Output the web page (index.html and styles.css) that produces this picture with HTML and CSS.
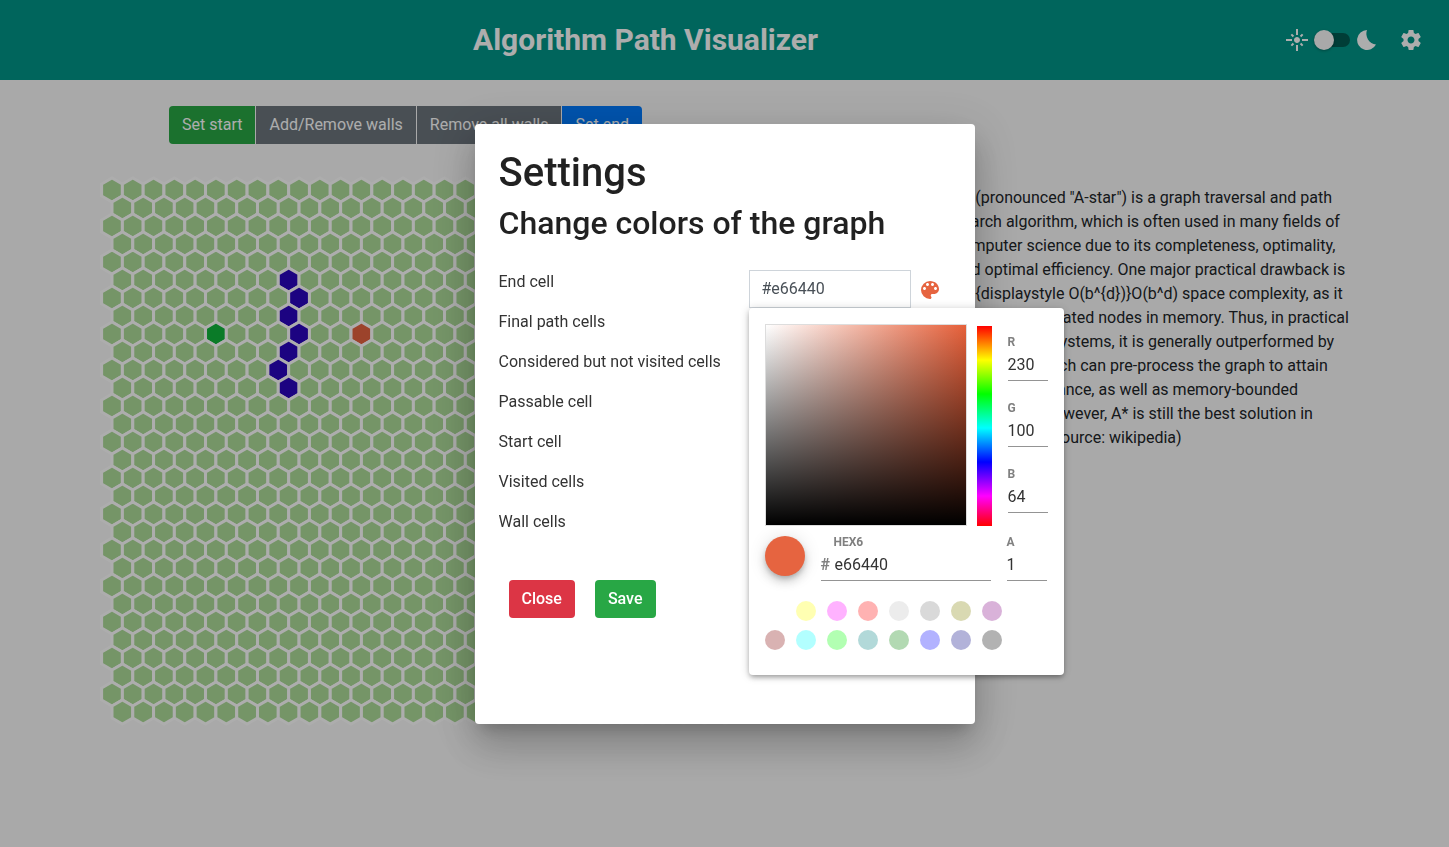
FILE: index.html
```html
<!DOCTYPE html>
<html lang="en">
<head>
<meta charset="utf-8">
<title>Algorithm Path Visualizer</title>
<link rel="stylesheet" href="styles.css">
</head>
<body>
<header class="toolbar">
  <h1 class="toolbar-title">Algorithm Path Visualizer</h1>
  <div class="toolbar-actions">
    <svg class="icon" viewBox="0 0 24 24" aria-hidden="true"><path d="M7 11H1v2h6v-2zm2.170-3.240L7.050 5.640 5.640 7.050l2.120 2.120 1.410-1.410zM13 1h-2v6h2V1zm5.360 6.050l-1.410-1.410-2.120 2.120 1.410 1.410 2.120-2.120zM17 11v2h6v-2h-6zm-5-2c-1.660 0-3 1.340-3 3s1.340 3 3 3 3-1.340 3-3-1.340-3-3-3zm2.830 7.240l2.120 2.120 1.410-1.410-2.120-2.120-1.410 1.410zm-9.190.710l1.410 1.410 2.120-2.120-1.410-1.410-2.120 2.120zM11 23h2v-6h-2v6z"/></svg>
    <input class="switch" type="checkbox" role="switch" aria-label="Dark mode">
    <svg class="icon" viewBox="0 0 24 24" aria-hidden="true"><path d="M12 2A10 10 0 1 0 21 16.600A11 11 0 0 1 12 2z"/></svg>
    <button class="icon-button" type="button" aria-label="Open settings">
      <svg class="icon" viewBox="0 0 24 24" aria-hidden="true"><path d="M19.430 12.980c.040-.320.070-.640.070-.980s-.030-.660-.070-.980l2.110-1.650c.190-.150.240-.420.120-.640l-2-3.460c-.120-.220-.390-.300-.610-.220l-2.490 1c-.520-.400-1.080-.730-1.690-.980l-.380-2.650C14.460 2.180 14.250 2 14 2h-4c-.250 0-.460.180-.490.420l-.380 2.650c-.610.250-1.170.590-1.690.980l-2.490-1c-.230-.090-.490 0-.610.220l-2 3.460c-.130.220-.070.490.120.640l2.110 1.650c-.040.320-.070.650-.070.980s.030.660.070.980l-2.110 1.650c-.190.150-.240.420-.120.640l2 3.460c.120.220.390.300.610.220l2.490-1c.520.400 1.080.730 1.690.980l.380 2.650c.030.240.240.420.490.420h4c.250 0 .460-.180.490-.420l.380-2.650c.610-.250 1.170-.590 1.690-.980l2.490 1c.230.090.490 0 .610-.220l2-3.460c.120-.220.070-.490-.120-.640l-2.110-1.650zM12 15.500c-1.930 0-3.500-1.570-3.500-3.500s1.570-3.500 3.500-3.500 3.500 1.570 3.500 3.500-1.570 3.500-3.500 3.500z"/></svg>
    </button>
  </div>
</header>

<main class="page">
  <section class="board">
    <div class="tools" role="group" aria-label="Grid tools">
      <button class="btn btn-success" type="button">Set start</button>
      <button class="btn btn-secondary" type="button">Add/Remove walls</button>
      <button class="btn btn-secondary" type="button">Remove all walls</button>
      <button class="btn btn-primary" type="button">Set end</button>
    </div>
    <svg class="grid" id="grid" viewBox="0 0 638 550" role="img" aria-label="Hexagonal grid"></svg>
  </section>
  <p class="description">A* (pronounced "A-star") is a graph traversal and path search algorithm, which is often used in many fields of computer science due to its completeness, optimality, and optimal efficiency. One major practical drawback is its {displaystyle O(b^{d})}O(b^d) space complexity, as it stores all generated nodes in memory. Thus, in practical travel-routing systems, it is generally outperformed by algorithms which can pre-process the graph to attain better performance, as well as memory-bounded approaches; however, A* is still the best solution in many cases. (source: wikipedia)</p>
</main>

<div class="backdrop">
  <div class="dialog" role="dialog" aria-modal="true" aria-labelledby="dialog-title">
    <h1 class="dialog-title" id="dialog-title">Settings</h1>
    <h2 class="dialog-subtitle">Change colors of the graph</h2>
    <div class="settings">
      <ul class="cell-list">
        <li><label for="end-color">End cell</label></li>
        <li>Final path cells</li>
        <li>Considered but not visited cells</li>
        <li>Passable cell</li>
        <li>Start cell</li>
        <li>Visited cells</li>
        <li>Wall cells</li>
      </ul>
      <div class="color-field">
        <input class="color-input" id="end-color" type="text" value="#e66440">
        <button class="palette-button" type="button" aria-label="Pick color">
          <svg class="icon" viewBox="0 0 24 24" aria-hidden="true"><path d="M12 3a9 9 0 0 0 0 18c.830 0 1.500-.670 1.500-1.500 0-.390-.150-.740-.390-1.010-.230-.260-.380-.610-.380-.990 0-.830.670-1.500 1.500-1.500H16c2.760 0 5-2.240 5-5 0-4.420-4.030-8-9-8zm-5.500 9c-.830 0-1.500-.670-1.500-1.500S5.670 9 6.500 9 8 9.670 8 10.500 7.330 12 6.500 12zm3-4C8.670 8 8 7.330 8 6.500S8.670 5 9.500 5s1.500.670 1.500 1.500S10.330 8 9.500 8zm5 0c-.830 0-1.500-.670-1.500-1.500S13.670 5 14.500 5s1.500.670 1.500 1.500S15.330 8 14.500 8zm3 4c-.830 0-1.500-.670-1.500-1.500S16.670 9 17.500 9s1.500.670 1.500 1.500-.670 1.500-1.500 1.500z"/></svg>
        </button>
        <div class="picker">
          <div class="picker-top">
            <div class="shade"></div>
            <div class="hue"></div>
            <div class="channels">
              <label class="field">R<input type="text" value="230"></label>
              <label class="field">G<input type="text" value="100"></label>
              <label class="field">B<input type="text" value="64"></label>
            </div>
          </div>
          <div class="picker-values">
            <span class="preview"></span>
            <label class="field field-hex">HEX6<span class="hex-row"><span class="hash">#</span><input type="text" value="e66440"></span></label>
            <label class="field field-alpha">A<input type="text" value="1"></label>
          </div>
          <div class="swatches">
            <button class="swatch white" type="button" aria-label="White"></button>
            <button class="swatch yellow" type="button" aria-label="Yellow"></button>
            <button class="swatch fuchsia" type="button" aria-label="Fuchsia"></button>
            <button class="swatch red" type="button" aria-label="Red"></button>
            <button class="swatch silver" type="button" aria-label="Silver"></button>
            <button class="swatch gray" type="button" aria-label="Gray"></button>
            <button class="swatch olive" type="button" aria-label="Olive"></button>
            <button class="swatch purple" type="button" aria-label="Purple"></button>
            <button class="swatch maroon" type="button" aria-label="Maroon"></button>
            <button class="swatch aqua" type="button" aria-label="Aqua"></button>
            <button class="swatch lime" type="button" aria-label="Lime"></button>
            <button class="swatch teal" type="button" aria-label="Teal"></button>
            <button class="swatch green" type="button" aria-label="Green"></button>
            <button class="swatch blue" type="button" aria-label="Blue"></button>
            <button class="swatch navy" type="button" aria-label="Navy"></button>
            <button class="swatch black" type="button" aria-label="Black"></button>
          </div>
        </div>
      </div>
    </div>
    <div class="dialog-actions">
      <button class="btn btn-danger" type="button">Close</button>
      <button class="btn btn-success" type="button">Save</button>
    </div>
  </div>
</div>
<script src="grid.js"></script>
</body>
</html>
```

FILE: grid.js
```js
const RADIUS = 12;
const ROWS = 30;
const COLUMNS = 30;
const kinds = {
  '8,5': 'start', '8,12': 'end',
  '5,8': 'wall', '6,9': 'wall', '7,8': 'wall', '8,9': 'wall',
  '9,8': 'wall', '10,8': 'wall', '11,8': 'wall'
};
const cellWidth = RADIUS * Math.sqrt(3);
const svg = document.getElementById('grid');

for (let row = 0; row < ROWS; row++) {
  for (let column = 0; column < COLUMNS; column++) {
    const cx = 12 + column * cellWidth + (row % 2) * cellWidth / 2;
    const cy = 14 + row * RADIUS * 1.5;
    const points = [];
    for (let corner = 0; corner < 6; corner++) {
      const angle = Math.PI / 3 * corner + Math.PI / 6;
      points.push((cx + RADIUS * Math.cos(angle)).toFixed(2) + ',' + (cy + RADIUS * Math.sin(angle)).toFixed(2));
    }
    const cell = document.createElementNS('http://www.w3.org/2000/svg', 'polygon');
    cell.setAttribute('points', points.join(' '));
    cell.setAttribute('class', 'cell ' + (kinds[row + ',' + column] || 'passable'));
    svg.appendChild(cell);
  }
}
```

FILE: styles.css
```css
* { box-sizing: border-box; }

body {
  margin: 0;
  min-height: 100vh;
  background: #fafafa;
  color: #212529;
  font: 400 16px/24px Roboto, sans-serif;
}

button, input { font: inherit; }

.icon { display: block; width: 24px; height: 24px; fill: currentColor; }

/* Toolbar */
.toolbar {
  display: grid;
  grid-template-columns: 1fr auto;
  align-items: center;
  height: 80px;
  padding: 0 26px 0 6px;
  background: #009688;
  color: #fff;
}
.toolbar-title {
  margin: 0;
  font-size: 30px;
  font-weight: 700;
  line-height: 40px;
  text-align: center;
}
.toolbar-actions { display: flex; align-items: center; gap: 5px; }
.icon-button {
  margin-left: 15px;
  padding: 0;
  border: 0;
  background: none;
  color: inherit;
}
.switch {
  appearance: none;
  position: relative;
  width: 36px;
  height: 14px;
  margin: 0;
  border-radius: 8px;
  background: #005a52;
}
.switch::before {
  content: "";
  position: absolute;
  top: -3px;
  left: 0;
  width: 20px;
  height: 20px;
  border-radius: 50%;
  background: #fafafa;
  box-shadow: 0 1px 3px rgba(0, 0, 0, .3);
}

/* Page */
.page {
  display: flex;
  justify-content: space-between;
  padding: 26px 95px 0 100px;
}
.board { flex: 0 1 638px; }
.tools { display: flex; gap: 1px; margin-left: 69px; }
.grid { display: block; width: 100%; margin-top: 32px; }
.cell { stroke: #fff; stroke-width: 3px; }
.passable { fill: #addc99; }
.start { fill: #10b63b; }
.end { fill: #e66440; }
.wall { fill: #2a05bf; }
.description { flex: 0 1 400px; margin: 80px 0 0; }

.btn {
  padding: 7px 13px;
  border: 0;
  border-radius: 4px;
  color: #fff;
  white-space: nowrap;
}
.tools .btn { border-radius: 0; }
.tools .btn:first-child { border-radius: 4px 0 0 4px; }
.tools .btn:last-child { border-radius: 0 4px 4px 0; }
.btn-success { background: #28a745; }
.btn-secondary { background: #6c757d; }
.btn-primary { background: #007bff; }
.btn-danger { background: #dc3545; }

/* Dialog */
.backdrop {
  position: fixed;
  inset: 0;
  display: flex;
  align-items: center;
  justify-content: center;
  background: rgba(0, 0, 0, .32);
}
.dialog {
  width: 500px;
  min-height: 600px;
  padding: 24px;
  border-radius: 4px;
  background: #fff;
  color: rgba(0, 0, 0, .87);
  box-shadow: 0 11px 15px -7px rgba(0, 0, 0, .2), 0 24px 38px 3px rgba(0, 0, 0, .14), 0 9px 46px 8px rgba(0, 0, 0, .12);
}
.dialog-title { margin: 0 0 6px; font-size: 40px; font-weight: 500; line-height: 50px; }
.dialog-subtitle { margin: 0 0 28px; font-size: 32px; font-weight: 500; line-height: 38px; }
.settings { display: grid; grid-template-columns: 250px 1fr; }
.cell-list { margin: 0; padding: 0; color: #333; list-style: none; }
.cell-list li { height: 40px; }
.color-field { position: relative; display: flex; align-items: center; align-self: start; gap: 7px; }
.color-input {
  width: 162px;
  height: 38px;
  padding: 6px 12px;
  border: 1px solid #ced4da;
  background: #fff;
  color: #495057;
}
.palette-button { padding: 2px 0 0; border: 0; background: none; color: #e66440; }
.dialog-actions { display: flex; gap: 20px; padding: 30px 10px 0; }
.dialog-actions .btn { font-weight: 500; }

/* Color picker */
.picker {
  position: absolute;
  top: 100%;
  left: 0;
  width: 315px;
  padding: 16px 16px 25px;
  border-radius: 4px;
  background: #fff;
  box-shadow: 0 3px 5px -1px rgba(0, 0, 0, .3), 0 1px 10px rgba(0, 0, 0, .2);
}
.picker-top { display: flex; gap: 10px; }
.shade {
  width: 202px;
  height: 202px;
  border: 1px solid #ddd;
  background: linear-gradient(to top, #000, transparent), linear-gradient(to right, #fff, #e6603a);
}
.hue {
  width: 15px;
  height: 200px;
  margin-top: 2px;
  background: linear-gradient(#f00, #ff0 17%, #0f0 34%, #0ff 51%, #00f 68%, #f0f 85%, #f00);
}
.channels { display: flex; flex-direction: column; gap: 19px; width: 40px; margin: 10px 0 0 6px; }
.field {
  display: block;
  width: 40px;
  color: #808080;
  font-size: 12px;
  font-weight: 700;
  line-height: 16px;
}
.field input {
  display: block;
  width: 100%;
  height: 31px;
  padding: 0 0 1px;
  border: 0;
  border-bottom: 1px solid #949494;
  background: none;
  color: #333;
  font-size: 16px;
  font-weight: 400;
}
.picker-values { display: flex; gap: 16px; margin-top: 8px; }
.preview {
  width: 40px;
  height: 40px;
  margin-top: 2px;
  border-radius: 50%;
  background: #e66440;
  box-shadow: 0 3px 5px -1px rgba(0, 0, 0, .2), 0 6px 10px rgba(0, 0, 0, .14), 0 1px 18px rgba(0, 0, 0, .12);
}
.field-hex { width: 170px; padding: 0; text-indent: 13px; }
.hex-row { display: flex; align-items: center; border-bottom: 1px solid #949494; text-indent: 0; }
.hex-row .hash { width: 14px; font-size: 16px; }
.hex-row input { width: 140px; height: 30px; padding: 0; border: 0; }
.swatches { display: grid; grid-template-columns: repeat(8, 20px); gap: 9px 11px; margin-top: 20px; }
.swatch { width: 20px; height: 20px; padding: 0; border: 0; border-radius: 50%; opacity: .3; }
.white { background: #fff; }
.yellow { background: #ff0; }
.fuchsia { background: #f0f; }
.red { background: #f00; }
.silver { background: #c0c0c0; }
.gray { background: #808080; }
.olive { background: #808000; }
.purple { background: #800080; }
.maroon { background: #800000; }
.aqua { background: #0ff; }
.lime { background: #0f0; }
.teal { background: #008080; }
.green { background: #008000; }
.blue { background: #00f; }
.navy { background: #000080; }
.black { background: #000; }
```
